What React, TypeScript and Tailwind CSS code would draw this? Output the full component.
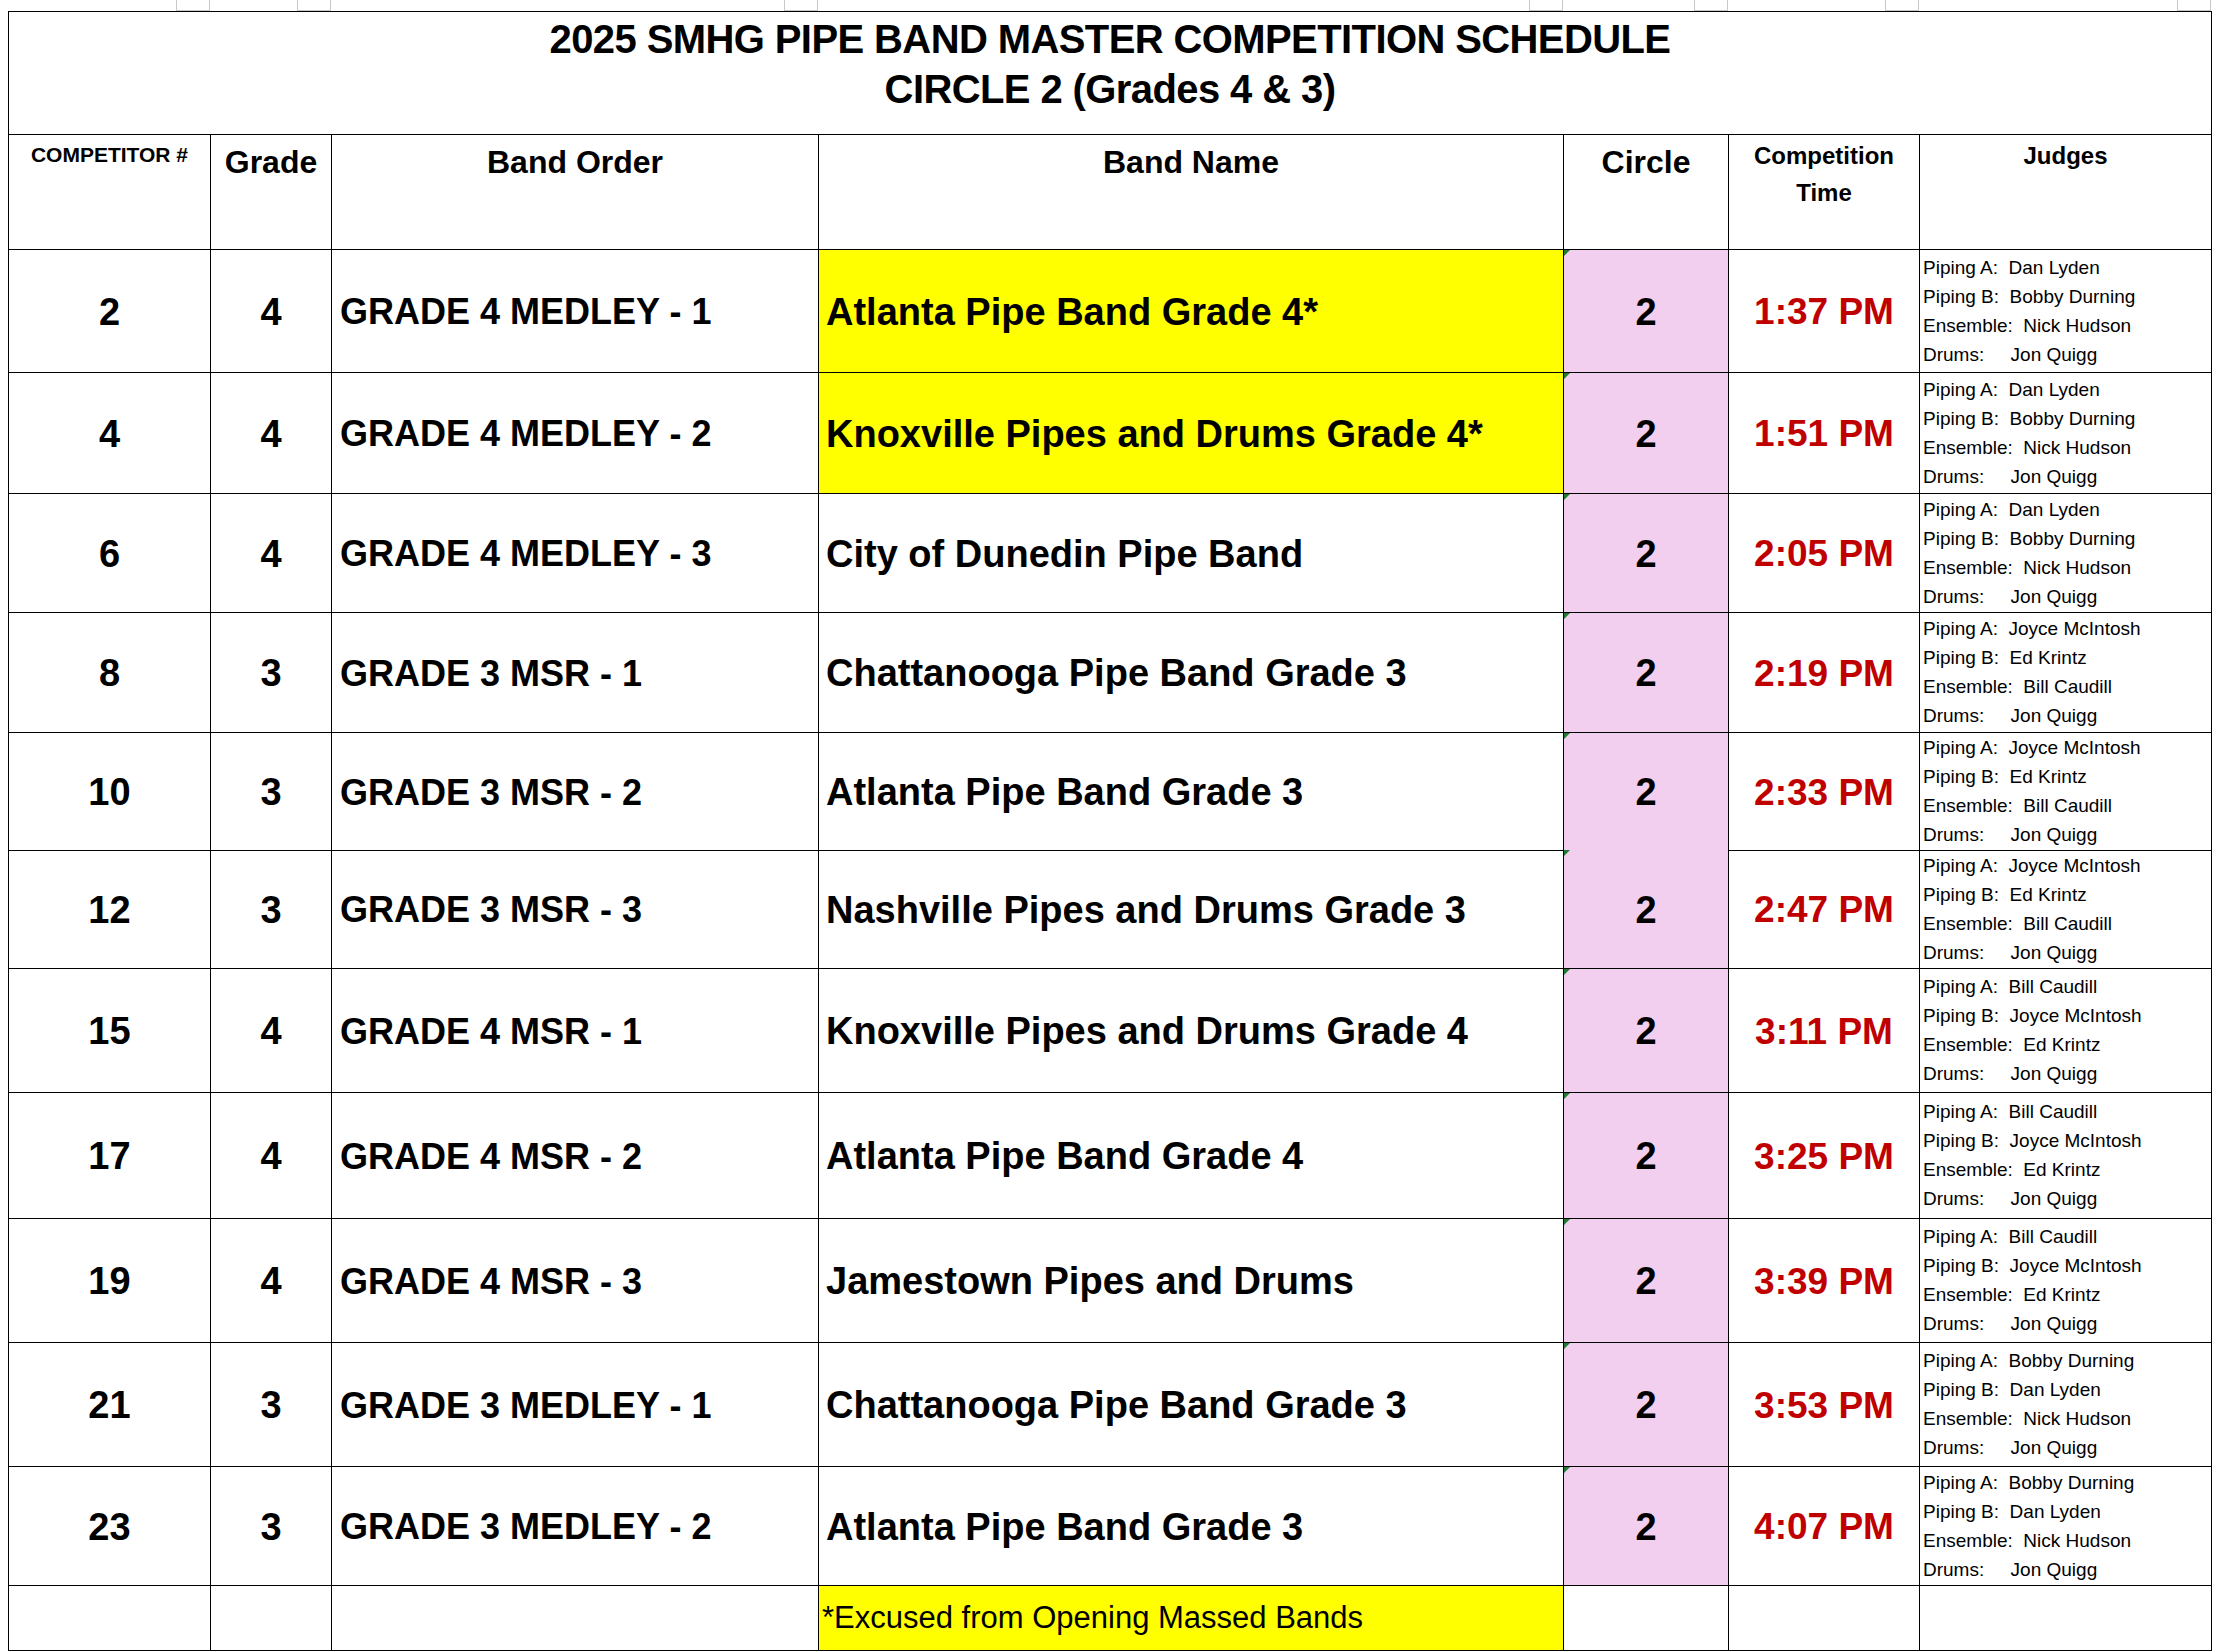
import React from 'react';

type Judges = { a: string; b: string; e: string; d: string };

type Row = {
  num: string;
  grade: string;
  order: string;
  band: string;
  highlight?: boolean;
  time: string;
  judges: Judges;
  h: string;
};

const setOne: Judges = { a: 'Dan Lyden', b: 'Bobby Durning', e: 'Nick Hudson', d: 'Jon Quigg' };
const setTwo: Judges = { a: 'Joyce McIntosh', b: 'Ed Krintz', e: 'Bill Caudill', d: 'Jon Quigg' };
const setThree: Judges = { a: 'Bill Caudill', b: 'Joyce McIntosh', e: 'Ed Krintz', d: 'Jon Quigg' };
const setFour: Judges = { a: 'Bobby Durning', b: 'Dan Lyden', e: 'Nick Hudson', d: 'Jon Quigg' };

const rows: Row[] = [
  { num: '2', grade: '4', order: 'GRADE 4 MEDLEY - 1', band: 'Atlanta Pipe Band Grade 4*', highlight: true, time: '1:37 PM', judges: setOne, h: 'h-[123px]' },
  { num: '4', grade: '4', order: 'GRADE 4 MEDLEY - 2', band: 'Knoxville Pipes and Drums Grade 4*', highlight: true, time: '1:51 PM', judges: setOne, h: 'h-[121px]' },
  { num: '6', grade: '4', order: 'GRADE 4 MEDLEY - 3', band: 'City of Dunedin Pipe Band', time: '2:05 PM', judges: setOne, h: 'h-[119px]' },
  { num: '8', grade: '3', order: 'GRADE 3 MSR - 1', band: 'Chattanooga Pipe Band Grade 3', time: '2:19 PM', judges: setTwo, h: 'h-[120px]' },
  { num: '10', grade: '3', order: 'GRADE 3 MSR - 2', band: 'Atlanta Pipe Band Grade 3', time: '2:33 PM', judges: setTwo, h: 'h-[117px]' },
  { num: '12', grade: '3', order: 'GRADE 3 MSR - 3', band: 'Nashville Pipes and Drums Grade 3', time: '2:47 PM', judges: setTwo, h: 'h-[119px]' },
  { num: '15', grade: '4', order: 'GRADE 4 MSR - 1', band: 'Knoxville Pipes and Drums Grade 4', time: '3:11 PM', judges: setThree, h: 'h-[124px]' },
  { num: '17', grade: '4', order: 'GRADE 4 MSR - 2', band: 'Atlanta Pipe Band Grade 4', time: '3:25 PM', judges: setThree, h: 'h-[126px]' },
  { num: '19', grade: '4', order: 'GRADE 4 MSR - 3', band: 'Jamestown Pipes and Drums', time: '3:39 PM', judges: setThree, h: 'h-[124px]' },
  { num: '21', grade: '3', order: 'GRADE 3 MEDLEY - 1', band: 'Chattanooga Pipe Band Grade 3', time: '3:53 PM', judges: setFour, h: 'h-[124px]' },
  { num: '23', grade: '3', order: 'GRADE 3 MEDLEY - 2', band: 'Atlanta Pipe Band Grade 3', time: '4:07 PM', judges: setFour, h: 'h-[119px]' },
];

const cols = 'grid grid-cols-[202px_121px_487px_745px_165px_191px_292px]';
const cell = 'border-r border-b border-black';

const CornerMark = () => (
  <div className="absolute top-0 left-0 w-0 h-0 border-t-[6px] border-r-[6px] border-t-[#1f7a34] border-r-transparent" />
);

const JudgeList = ({ j }: { j: Judges }) => (
  <div className="flex flex-col text-[19px] leading-[29px] whitespace-pre">
    <span>{`Piping A:  ${j.a}`}</span>
    <span>{`Piping B:  ${j.b}`}</span>
    <span>{`Ensemble:  ${j.e}`}</span>
    <span>{`Drums:     ${j.d}`}</span>
  </div>
);

export default function App() {
  return (
    <div className="min-h-screen bg-white text-black font-['Liberation_Sans',Arial,sans-serif]">
      {/* column handles along the top edge */}
      <div className={`${cols} h-[11px] ml-2`}>
        {[0, 1, 2, 3, 4, 5, 6].map((i) => (
          <div key={i} className="flex justify-end">
            <div className="w-[34px] h-[11px] border border-t-0 border-[#c8c8c8] bg-white" />
          </div>
        ))}
      </div>

      <div className="ml-2 w-[2204px] border-l border-t border-black">
        {/* Title */}
        <div className={`${cell} h-[123px] pt-[2px] flex flex-col items-center text-[40px] leading-[50px] font-bold tracking-[-0.6px]`}>
          <span>2025 SMHG PIPE BAND MASTER COMPETITION SCHEDULE</span>
          <span>CIRCLE 2 (Grades 4 &amp; 3)</span>
        </div>

        {/* Header */}
        <div className={`${cols} h-[115px] font-bold`}>
          <div className={`${cell} flex justify-center pt-[6px] text-[21px] leading-[28px]`}>COMPETITOR #</div>
          <div className={`${cell} flex justify-center pt-[7px] text-[32px] leading-[40px]`}>Grade</div>
          <div className={`${cell} flex justify-center pt-[7px] text-[32px] leading-[40px]`}>Band Order</div>
          <div className={`${cell} flex justify-center pt-[7px] text-[32px] leading-[40px]`}>Band Name</div>
          <div className={`${cell} flex justify-center pt-[7px] text-[32px] leading-[40px]`}>Circle</div>
          <div className={`${cell} flex flex-col items-center pt-[2px] text-[24px] leading-[37px]`}>
            <span>Competition</span>
            <span>Time</span>
          </div>
          <div className={`${cell} flex justify-center pt-[2px] text-[24px] leading-[37px]`}>Judges</div>
        </div>

        {/* Rows */}
        {rows.map((r) => (
          <div key={r.num} className={`${cols} ${r.h}`}>
            <div className={`${cell} flex items-center justify-center pt-[2px] text-[38px] font-bold`}>{r.num}</div>
            <div className={`${cell} flex items-center justify-center pt-[2px] text-[38px] font-bold`}>{r.grade}</div>
            <div className={`${cell} flex items-center pl-[8px] pt-[2px] text-[36px] font-bold whitespace-nowrap`}>{r.order}</div>
            <div className={`${cell} flex items-center pl-[7px] pt-[2px] text-[38px] font-bold whitespace-nowrap ${r.highlight ? 'bg-[#ffff00]' : ''}`}>
              {r.band}
            </div>
            <div className={`${cell} relative flex items-center justify-center pt-[2px] text-[38px] font-bold bg-[#f2ceef]`}>
              <CornerMark />
              2
            </div>
            <div className={`${cell} flex items-center justify-center pt-[2px] text-[37px] font-bold text-[#c00000] whitespace-nowrap`}>
              {r.time}
            </div>
            <div className={`${cell} flex items-center pl-[3px] pb-[1px]`}>
              <JudgeList j={r.judges} />
            </div>
          </div>
        ))}

        {/* Footnote */}
        <div className={`${cols} h-[65px]`}>
          <div className={cell} />
          <div className={cell} />
          <div className={cell} />
          <div className={`${cell} flex items-center pl-[3px] text-[31px] bg-[#ffff00] whitespace-nowrap`}>
            *Excused from Opening Massed Bands
          </div>
          <div className={cell} />
          <div className={cell} />
          <div className={cell} />
        </div>
      </div>
    </div>
  );
}
